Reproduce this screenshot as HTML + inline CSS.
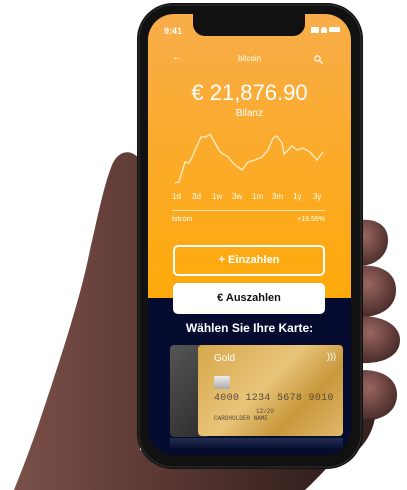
<!DOCTYPE html>
<html><head><meta charset="utf-8"><style>
html,body{margin:0;padding:0;background:#fff;width:407px;height:490px;overflow:hidden;font-family:"Liberation Sans",sans-serif}
.abs{position:absolute}
</style></head><body>
<svg class="abs" style="left:0;top:0" width="407" height="490" viewBox="0 0 407 490">
<defs>
<linearGradient id="sk" x1="0" y1="0" x2="1" y2="0"><stop offset="0" stop-color="#7a5048"/><stop offset="0.45" stop-color="#5a3833"/><stop offset="1" stop-color="#2e1c1a"/></linearGradient>
<radialGradient id="fg" cx="0.4" cy="0.35" r="0.7"><stop offset="0" stop-color="#9a6560"/><stop offset="1" stop-color="#442826"/></radialGradient>
</defs>
<path d="M140 160 C132 148 118 150 112 165 C104 185 98 215 90 250 C80 300 60 360 40 420 C30 450 20 475 14 490 L305 490 C318 478 330 465 342 450 L140 450 Z" fill="url(#sk)"/>
<path d="M350 222 C370 216 388 222 388 240 C388 258 372 268 352 266 Z" fill="url(#fg)"/>
<path d="M350 268 C372 262 396 268 396 290 C396 312 372 320 350 316 Z" fill="url(#fg)"/>
<path d="M350 318 C374 312 400 322 400 340 C400 360 374 366 350 362 Z" fill="url(#fg)"/>
<path d="M350 372 C372 366 398 374 397 396 C396 416 374 424 350 420 Z" fill="url(#fg)"/>
<path d="M345 420 L375 418 C372 435 362 450 345 460 Z" fill="#3a2220"/>
<rect x="137" y="3" width="226" height="466" rx="36" fill="#111"/>
<rect x="139" y="5" width="222" height="462" rx="34" fill="none" stroke="#333" stroke-width="1"/>
</svg>
<div class="abs" style="left:148px;top:14px;width:203px;height:441px;border-radius:26px;overflow:hidden;background:#060c30">
  <div class="abs" style="left:0;top:0;width:203px;height:284px;background:linear-gradient(#f8ad4a,#fea90a)"></div>
  <div class="abs" style="left:45px;top:0;width:112px;height:22px;background:#111;border-radius:0 0 12px 12px"></div>
  <div class="abs" style="left:16px;top:12px;color:#fff;font-size:9px;font-weight:bold">9:41</div>
  <div class="abs" style="left:163px;top:13px;width:30px;height:7px;color:#fff;font-size:7px">
    <span style="display:inline-block;width:8px;height:6px;background:#fff;vertical-align:top"></span>
    <span style="display:inline-block;width:6px;height:6px;background:#fff;border-radius:6px 6px 0 0;vertical-align:top"></span>
    <span style="display:inline-block;width:11px;height:5px;background:#fff;border-radius:1px;vertical-align:top"></span>
  </div>
  <div class="abs" style="left:24px;top:38px;color:#fff;font-size:10px">←</div>
  <div class="abs" style="left:0;top:40px;width:203px;text-align:center;color:#fff;font-size:8px">bitcoin</div>
  <svg class="abs" style="left:166px;top:41px" width="9" height="9"><circle cx="3.5" cy="3.5" r="2.7" stroke="#fff" fill="none" stroke-width="1.2"/><path d="M5.5 5.5 L8.5 8.5" stroke="#fff" stroke-width="1.2"/></svg>
  <div class="abs" style="left:0;top:66px;width:203px;text-align:center;color:#fff;font-size:22px">€ 21,876.90</div>
  <div class="abs" style="left:0;top:94px;width:203px;text-align:center;color:#fff;font-size:10px">Bilanz</div>
  <svg class="abs" style="left:0;top:0" width="203" height="220"><polyline fill="none" stroke="#fee9c0" stroke-width="1.4" points="27,169 31,168 37,148 41,149 45,141 53,123 58,123 62,120 72,138 80,143 87,151 94,156 100,148 107,146 114,143 120,136 125,124 129,122 134,129 136,140 144,132 149,136 155,134 162,138 169,146 175,138"/></svg>
  <div class="abs" style="left:24px;top:178px;width:160px;color:#fff;font-size:8px">
    <span class="abs" style="left:0">1d</span><span class="abs" style="left:20px">3d</span><span class="abs" style="left:40px">1w</span><span class="abs" style="left:60px">3w</span><span class="abs" style="left:80px">1m</span><span class="abs" style="left:100px">3m</span><span class="abs" style="left:121px">1y</span><span class="abs" style="left:141px">3y</span>
  </div>
  <div class="abs" style="left:24px;top:196px;width:153px;height:1px;background:#fde3b0"></div>
  <div class="abs" style="left:24px;top:202px;color:#fff;font-size:7px">bitcoin</div>
  <div class="abs" style="left:130px;top:202px;width:47px;text-align:right;color:#fff;font-size:7px">+19.56%</div>
  <div class="abs" style="left:25px;top:231px;width:148px;height:27px;border:2px solid #fff;border-radius:5px;color:#fff;font-size:11px;font-weight:bold;text-align:center;line-height:27px">+ Einzahlen</div>
  <div class="abs" style="left:25px;top:269px;width:152px;height:31px;background:#fff;border-radius:5px;color:#111;font-size:11px;font-weight:bold;text-align:center;line-height:31px">€ Auszahlen</div>
  <div class="abs" style="left:0;top:307px;width:203px;text-align:center;color:#fff;font-size:12px;font-weight:bold">Wählen Sie Ihre Karte:</div>
  <div class="abs" style="left:22px;top:331px;width:40px;height:92px;background:linear-gradient(135deg,#555,#2c2c2c);border-radius:4px"></div>
  <div class="abs" style="left:50px;top:331px;width:145px;height:91px;border-radius:4px;background:linear-gradient(135deg,#d6a84a,#e8c47a 45%,#c8983c 70%,#e0b86a);overflow:hidden">
    <div class="abs" style="left:16px;top:8px;color:#fff;font-size:10px">Gold</div>
    <div class="abs" style="right:7px;top:6px;color:#fff;font-size:9px">)))</div>
    <div class="abs" style="left:16px;top:31px;width:16px;height:13px;background:linear-gradient(#eee,#aaa);border-radius:2px"></div>
    <div class="abs" style="left:16px;top:48px;color:#5a4a3a;font-family:'Liberation Mono',monospace;font-size:10px;letter-spacing:0.3px">4000 1234 5678 9010</div>
    <div class="abs" style="left:58px;top:63px;color:#5a4a3a;font-family:'Liberation Mono',monospace;font-size:6px">12/20</div>
    <div class="abs" style="left:16px;top:70px;color:#5a4a3a;font-family:'Liberation Mono',monospace;font-size:6px">CARDHOLDER NAME</div>
  </div>
  <div class="abs" style="left:22px;top:424px;width:173px;height:10px;background:linear-gradient(#2a3658,#0a1236);opacity:.8"></div>
</div>
</body></html>
